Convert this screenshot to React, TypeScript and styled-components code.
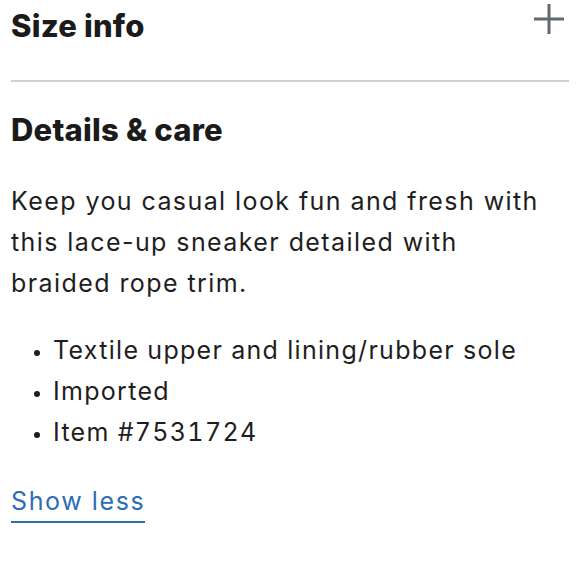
import React from "react";
import styled, { createGlobalStyle } from "styled-components";

const Global = createGlobalStyle`
  html, body { margin: 0; padding: 0; background: #fff; }
  body { font-family: Inter, "Open Sans", sans-serif; color: #1c1c1c; }
`;

const Page = styled.div`
  width: 580px;
  padding: 0 11px;
  box-sizing: border-box;
`;

const Section = styled.section<{ $divider?: boolean }>`
  border-bottom: ${(p) => (p.$divider ? "2px solid #cbd2d2" : "none")};
`;

const HeaderRow = styled.div`
  display: flex;
  align-items: flex-start;
  justify-content: space-between;
`;

const Heading = styled.h2<{ $top: number; $bottom: number }>`
  margin: ${(p) => p.$top}px 0 ${(p) => p.$bottom}px;
  font-family: Inter, "Liberation Sans", sans-serif;
  font-weight: 800;
  font-size: 31px;
  line-height: 36px;
  letter-spacing: 0.2px;
  color: #1b1b1b;
`;

const PlusButton = styled.button`
  border: none;
  background: none;
  padding: 0;
  width: 32px;
  height: 32px;
  margin-right: 4px;
  margin-top: 3px;
  display: flex;
  align-items: center;
  justify-content: center;
`;

const Paragraph = styled.p`
  margin: 0 0 24px;
  padding-right: 16px;
  font-size: 25px;
  line-height: 41px;
  letter-spacing: 1.42px;
  color: #1e1e1e;
`;

const List = styled.ul`
  margin: 0 0 30px;
  padding: 2px 0 0 42px;
  font-size: 25px;
  line-height: 41px;
  letter-spacing: 1.3px;
  font-variant-numeric: tabular-nums;
  color: #1e1e1e;
  li::marker { font-size: 20px; }
`;

const Link = styled.a`
  display: inline-block;
  font-size: 25px;
  line-height: 36px;
  letter-spacing: 1.6px;
  color: #2d6db5;
  text-decoration: none;
  border-bottom: 2px solid #2d6db5;
  padding-bottom: 2px;
`;

export default function App() {
  return (
    <Page>
      <Global />
      <Section $divider>
        <HeaderRow>
          <Heading $top={8} $bottom={36}>Size info</Heading>
          <PlusButton aria-label="Expand">
            <svg width="32" height="32" viewBox="0 0 32 32">
              <path d="M16 1v30M1 16h30" stroke="#5f6a6c" strokeWidth="3" fill="none" />
            </svg>
          </PlusButton>
        </HeaderRow>
      </Section>
      <Section>
        <Heading $top={30} $bottom={33}>Details &amp; care</Heading>
        <Paragraph>
          Keep you casual look fun and fresh with this lace-up sneaker detailed with braided rope trim.
        </Paragraph>
        <List>
          <li>Textile upper and lining/rubber sole</li>
          <li>Imported</li>
          <li>Item #7531724</li>
        </List>
        <Link href="#">Show less</Link>
      </Section>
    </Page>
  );
}
